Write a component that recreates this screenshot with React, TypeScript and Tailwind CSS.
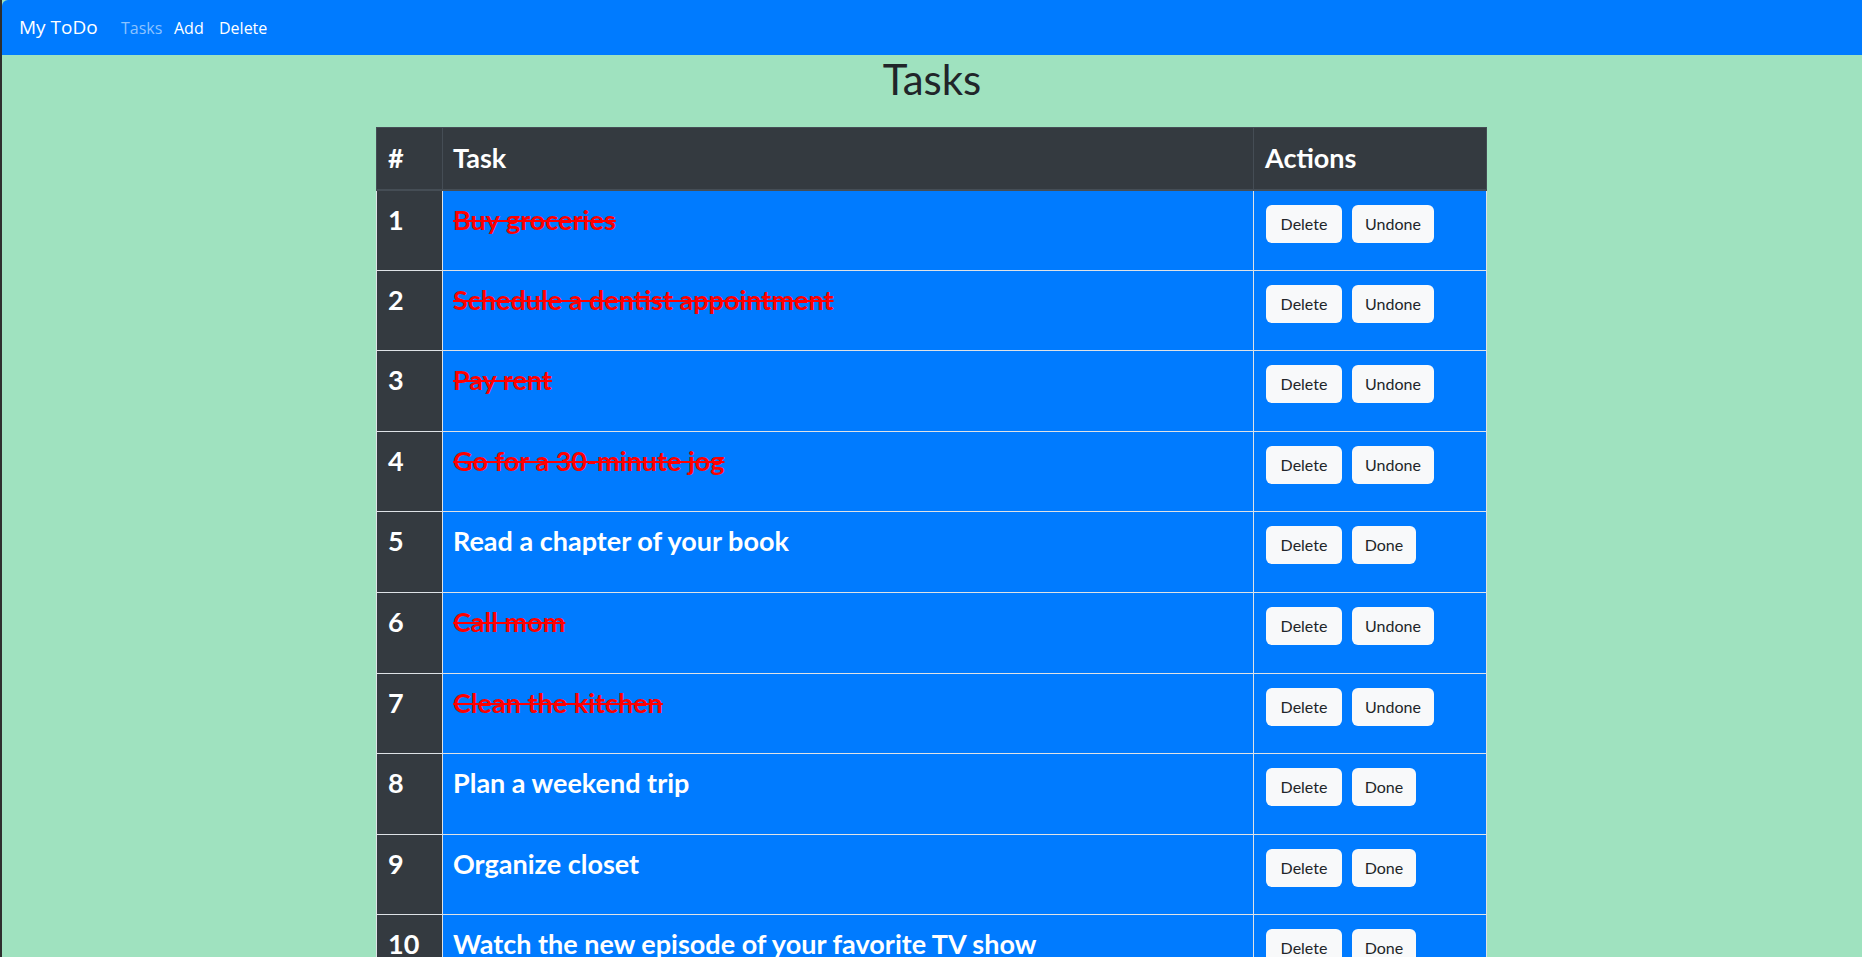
import React from "react";

const tasks = [
  { t: "Buy groceries", done: true },
  { t: "Schedule a dentist appointment", done: true },
  { t: "Pay rent", done: true },
  { t: "Go for a 30-minute jog", done: true },
  { t: "Read a chapter of your book", done: false },
  { t: "Call mom", done: true },
  { t: "Clean the kitchen", done: true },
  { t: "Plan a weekend trip", done: false },
  { t: "Organize closet", done: false },
  { t: "Watch the new episode of your favorite TV show", done: false },
];

export default function App() {
  return (
    <div className="h-screen overflow-hidden bg-[#9fe2bf] border-l-2 border-[#2e2e2e] font-['Comic_Sans_MS',Lato,sans-serif]">
      <nav className="h-[55px] bg-[#007bff] flex items-center pl-[17px] font-['Open_Sans',sans-serif] rounded-tl-[6px]">
        <span className="text-white text-[19px] w-[78px] whitespace-nowrap">My ToDo</span>
        <span className="ml-[24px] w-[36px] text-[16px] text-[#8cc3ff] whitespace-nowrap">Tasks</span>
        <span className="ml-[17px] w-[29px] text-[16px] text-white whitespace-nowrap">Add</span>
        <span className="ml-[16px] text-[16px] text-white whitespace-nowrap">Delete</span>
      </nav>
      <h1 className="text-center text-[42px] leading-[48px] text-[#212529] mb-[24px]">Tasks</h1>
      <table className="ml-[374px] w-[1110px] table-fixed border-collapse text-[27px] font-bold">
        <colgroup>
          <col className="w-[66px]" />
          <col className="w-[811px]" />
          <col className="w-[233px]" />
        </colgroup>
        <thead>
          <tr className="h-[62px] bg-[#343a40] text-white">
            <th className="text-left align-middle pl-[11px] pr-3 border border-[#454d55] border-b-2">#</th>
            <th className="text-left align-middle pl-[10px] pr-3 border border-[#454d55] border-b-2">Task</th>
            <th className="text-left align-middle pl-[11px] pr-3 border border-[#454d55] border-b-2">Actions</th>
          </tr>
        </thead>
        <tbody>
          {tasks.map((task, i) => (
            <tr key={i} className="h-[80.6px]">
              <td className="bg-[#343a40] text-white align-top pl-[11px] pr-3 pt-[13px] leading-[1.2] border border-[#dee2e6]">
                {i + 1}
              </td>
              <td className="bg-[#007bff] align-top pl-[10px] pr-3 pt-[13px] leading-[1.2] border border-[#dee2e6]">
                <span className={task.done ? "text-[#ff0000] line-through" : "text-white"}>{task.t}</span>
              </td>
              <td className="bg-[#007bff] align-top px-3 pt-[14px] border border-[#dee2e6]">
                <div className="flex gap-[10px]">
                  <button className="w-[76px] h-[38px] rounded-[6px] bg-[#f8f9fa] text-[#212529] text-[16px] font-normal">
                    Delete
                  </button>
                  <button
                    className={
                      task.done
                        ? "w-[82px] h-[38px] rounded-[6px] bg-[#f8f9fa] text-[#212529] text-[16px] font-normal"
                        : "w-[64px] h-[38px] rounded-[6px] bg-[#f8f9fa] text-[#212529] text-[16px] font-normal"
                    }
                  >
                    {task.done ? "Undone" : "Done"}
                  </button>
                </div>
              </td>
            </tr>
          ))}
        </tbody>
      </table>
    </div>
  );
}
